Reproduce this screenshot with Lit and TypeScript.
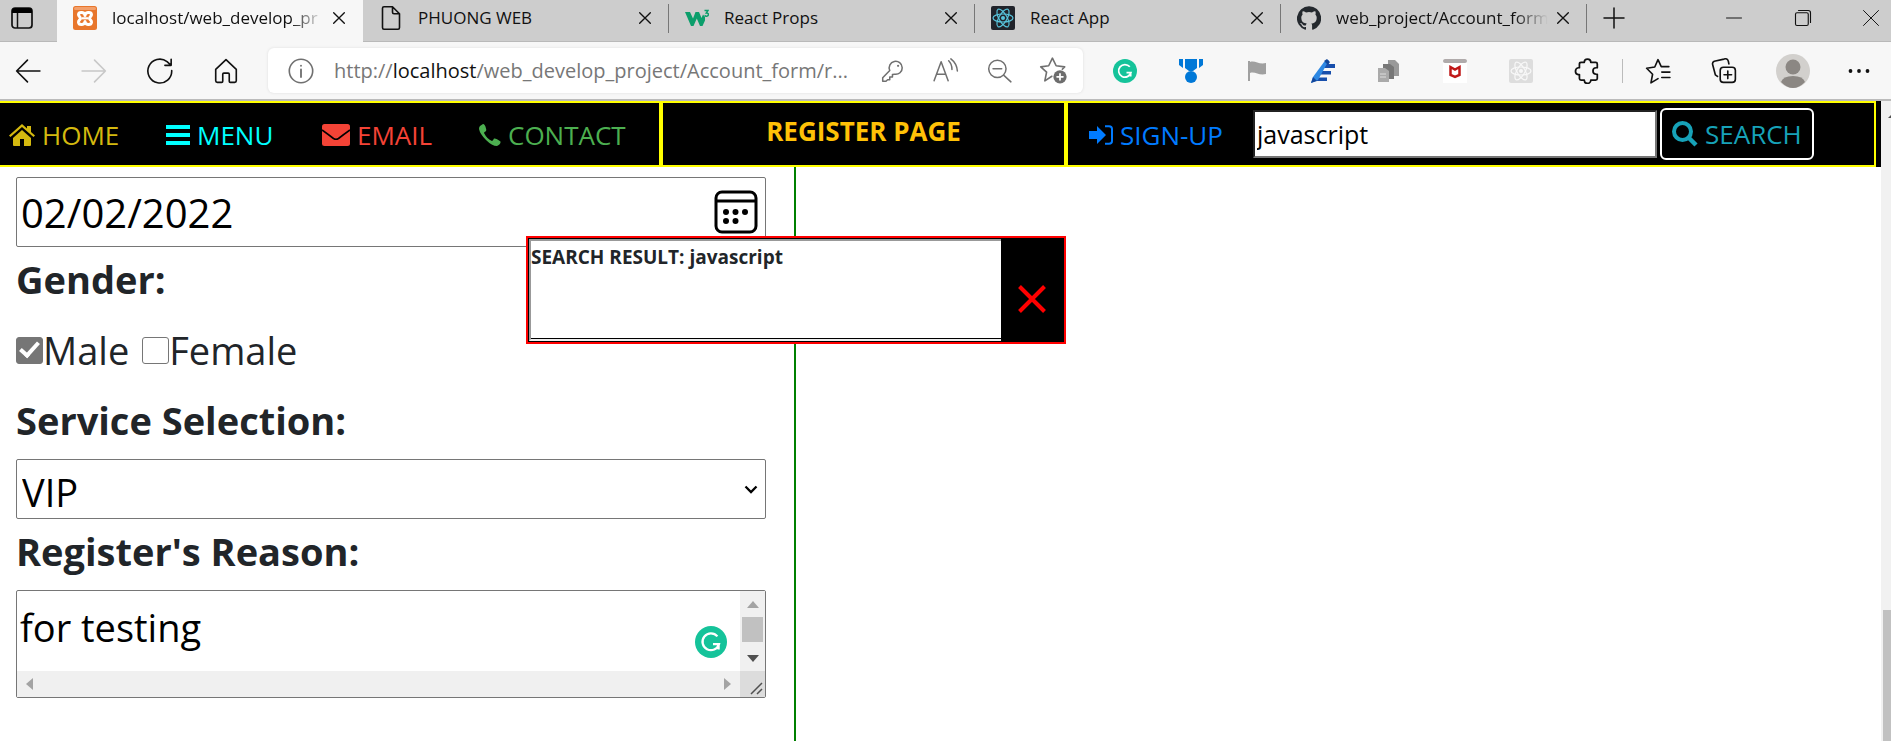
import { LitElement, html, css, svg } from "lit";
import { customElement, property, state } from "lit/decorators.js";

const stroke = (size: number, body: unknown, width = 1.5, cls = "") => html`<svg class=${cls} width=${size} height=${size} viewBox="0 0 24 24" fill="none" stroke="currentColor" stroke-width=${width} stroke-linejoin="round" stroke-linecap="round" aria-hidden="true">${body}</svg>`;
const solid = (size: number, body: unknown) => html`<svg width=${size} height=${size} viewBox="0 0 24 24" fill="currentColor" aria-hidden="true">${body}</svg>`;

const atom = (color: string) => svg`<g fill="none" stroke=${color} stroke-width="1.2"><ellipse cx="12" cy="12" rx="10" ry="4"/><ellipse cx="12" cy="12" rx="10" ry="4" transform="rotate(60 12 12)"/><ellipse cx="12" cy="12" rx="10" ry="4" transform="rotate(120 12 12)"/></g><circle cx="12" cy="12" r="2" fill=${color}/>`;

const favicons: Record<string, unknown> = {
  xampp: solid(24, svg`<rect width="24" height="24" rx="2.5" fill="#e8762c"/><rect x="1" y="1" width="22" height="3" rx="1.5" fill="#f3a06b"/><path fill="none" stroke="#fff" stroke-width="3" stroke-linejoin="round" stroke-linecap="round" d="M12 9.500C12 6 6 5.500 5.500 8.500C5.300 10.500 7.500 10.500 7.500 12.300C7.500 14 5.300 14 5.500 16.200C6 19.500 12 19 12 15.500C12 19 18 19.500 18.500 16.200C18.700 14 16.500 14 16.500 12.300C16.500 10.500 18.700 10.500 18.500 8.500C18 5.500 12 6 12 9.500Z"/><path d="M9 12.300H15" stroke="#fff" stroke-width="2.200"/>`),
  file: stroke(24, svg`<path d="M5 .8H13.500L20.500 7.800V21.500Q20.500 23.200 19 23.200H5Q3.500 23.200 3.500 21.500V2.300Q3.500 .8 5 .8ZM13.500 .8V6.300Q13.500 7.800 15 7.800H20.500"/>`, 1.6),
  w3: solid(24, svg`<path fill="#0c9e6b" d="M0 6H5L8 12.500L10.500 6H14L16.500 12L18 8.500L20 11V14.500L17.500 20H15L11.800 12.500L8.500 20H6Z"/><path fill="none" stroke="#0c9e6b" stroke-width="1.500" d="M19.500 4.500H23L21.300 7C24.500 7 23.700 10.800 21 10.200L19.500 9.500"/>`),
  react: solid(24, svg`<rect width="24" height="24" rx="2" fill="#20232a"/>${atom("#58c4dc")}`),
  github: solid(24, svg`<path fill="#24292e" d="M12 .3a12 12 0 0 0-3.800 23.400c.6.1.8-.3.8-.6v-2c-3.300.7-4-1.600-4-1.600-.6-1.400-1.400-1.800-1.400-1.800-1.100-.7.1-.7.1-.7 1.200.1 1.800 1.200 1.800 1.200 1.100 1.800 2.800 1.300 3.500 1 .1-.8.400-1.300.8-1.600-2.700-.3-5.500-1.300-5.500-6 0-1.200.5-2.300 1.300-3.100-.2-.4-.6-1.600.1-3.200 0 0 1-.3 3.300 1.200a11.500 11.500 0 0 1 6 0c2.300-1.500 3.300-1.200 3.300-1.200.7 1.600.3 2.800.1 3.200.8.8 1.300 1.900 1.300 3.200 0 4.600-2.800 5.600-5.500 5.900.5.400.9 1.100.9 2.200v3.300c0 .3.1.7.8.6A12 12 0 0 0 12 .3"/>`),
};

const grammarly = (size: number) => solid(size, svg`<circle cx="12" cy="12" r="12" fill="#15c39a"/><path fill="none" stroke="#fff" stroke-width="1.700" d="M16.800 7.800A6.300 6.300 0 1 0 18 13.600H13.500M17.700 13.600V17.600"/>`);

const cross = (size: number, width = 1.5) => stroke(size, svg`<path d="M4 4L20 20M20 4L4 20"/>`, width);

@customElement("browser-tab")
class BrowserTab extends LitElement {
  @property() label = "";
  @property() icon = "";
  @property({ type: Boolean, reflect: true }) active = false;
  static styles = css`
    :host { display: flex; align-items: center; flex: 0 1 306px; min-width: 0; height: 41px; box-sizing: border-box; padding: 0 14px 5px 16px; position: relative; font: 17px/24px "Open Sans", "Noto Sans", sans-serif; color: #111; }
    :host(:not([active]))::after { content: ""; position: absolute; right: 0; top: 4px; height: 29px; width: 1px; background: #777; }
    :host([active]) { background: #f7f7f7; height: 42px; padding-bottom: 6px; }
    .title { flex: 1; min-width: 0; margin-left: 15px; margin-right: 5px; white-space: nowrap; }
    .fade { mask-image: linear-gradient(to right, #000 84%, transparent 100%); }
    svg { flex: none; display: block; }
    button { border: 0; background: none; padding: 2px; color: #111; flex: none; }
  `;
  render() {
    return html`${favicons[this.icon]}
      <span class="title ${this.label.length > 16 ? "fade" : ""}">${this.label}</span>
      <button aria-label="Close tab">${cross(16, 2)}</button>`;
  }
}

@customElement("browser-chrome")
class BrowserChrome extends LitElement {
  static styles = css`
    :host { display: block; font-family: "Open Sans", "Noto Sans", sans-serif; color: #111; }
    button { border: 0; background: none; padding: 0; color: inherit; display: grid; place-items: center; flex: none; }
    svg { display: block; flex: none; }
    .strip { display: flex; align-items: flex-start; height: 42px; background: #cdcdcd; box-shadow: inset 0 -1px #b9b9b9; }
    .workspace { width: 57px; height: 36px; padding-right: 13px; box-sizing: border-box; }
    .plus { width: 54px; height: 35px; }
    .window { display: flex; margin-left: auto; height: 35px; }
    .window button { width: 69px; }
    .window button:last-child { width: 54px; padding-left: 14px; }
    .toolbar { display: flex; align-items: center; height: 57px; background: #f7f7f7; border-bottom: 2px solid #bbb; }
    .nav { display: flex; width: 268px; padding-left: 11px; box-sizing: border-box; gap: 32px; }
    .nav button { width: 34px; }
    .pale { color: #c8c8c8; }
    .address { display: flex; align-items: center; flex: 0 1 815px; min-width: 0; height: 45px; box-sizing: border-box; background: #fff; border-radius: 6px; padding: 0 16px 0 20px; color: #707070; box-shadow: 0 0 3px #ddd; }
    .url { flex: 1; min-width: 0; margin-left: 20px; font-size: 20px; line-height: 28px; white-space: nowrap; overflow: hidden; text-overflow: ellipsis; color: #777; }
    .url b { font-weight: 400; color: #111; }
    .tools { display: flex; gap: 27px; }
    .extras { display: flex; flex: 1; align-items: center; padding-left: 9px; min-width: 0; }
    .extras button { flex: 0 1 66px; min-width: 34px; }
    .extras .profile { flex-basis: 72px; }
    .extras button:last-child { flex-basis: 60px; }
    .rule { width: 1px; height: 24px; background: #bbb; margin: 0 2px; }
  `;
  render() {
    return html`
      <div class="strip">
        <button class="workspace" aria-label="Tab actions"><svg width="22" height="22" viewBox="0 0 22 22"><rect x="1" y="1" width="20" height="20" rx="3" fill="none" stroke="#111" stroke-width="1.700"/><path d="M1 6V4Q1 1 4 1H18Q21 1 21 4V6Z"/><path d="M6.500 6V21" stroke="#111" stroke-width="1.500"/></svg></button>
        <browser-tab active icon="xampp" label="localhost/web_develop_pr"></browser-tab>
        <browser-tab icon="file" label="PHUONG WEB"></browser-tab>
        <browser-tab icon="w3" label="React Props"></browser-tab>
        <browser-tab icon="react" label="React App"></browser-tab>
        <browser-tab icon="github" label="web_project/Account_form"></browser-tab>
        <button class="plus" aria-label="New tab">${stroke(24, svg`<path d="M2 12H22M12 2V22"/>`)}</button>
        <div class="window">
          <button aria-label="Minimize">${stroke(18, svg`<path d="M2 12H22"/>`, 1.3)}</button>
          <button aria-label="Restore">${stroke(18, svg`<rect x="2" y="5" width="17" height="17" rx="2"/><path d="M6 2H19Q22 2 22 5V18"/>`)}</button>
          <button aria-label="Close window">${stroke(18, svg`<path d="M2 2L22 22M22 2L2 22"/>`, 1.3)}</button>
        </div>
      </div>
      <div class="toolbar">
        <div class="nav">
          <button aria-label="Back">${stroke(26, svg`<path d="M23 12H1.500M11.500 2L1.500 12L11.500 22"/>`)}</button>
          <button class="pale" aria-label="Forward">${stroke(26, svg`<path d="M1 12H22.500M12.500 2L22.500 12L12.500 22"/>`)}</button>
          <button aria-label="Refresh">${stroke(26, svg`<path d="M22.800 11.500A11 11 0 1 1 18.500 3.300L22 6.500M22.300 1.200V6.800H16.500"/>`)}</button>
          <button aria-label="Home">${stroke(26, svg`<path d="M2.500 10.500L12 1.500L21.500 10.500V21Q21.500 22.500 20 22.500H16Q15 22.500 15 21.500V15Q15 14 14 14H10Q9 14 9 15V21.500Q9 22.500 8 22.500H4Q2.500 22.500 2.500 21Z"/>`)}</button>
        </div>
        <div class="address">
          ${stroke(26, svg`<circle cx="12" cy="12" r="10.800"/><path d="M12 10.500V17.500M12 7V7.200" stroke-width="1.700"/>`)}
          <span class="url">http://<b>localhost</b>/web_develop_project/Account_form/r...</span>
          <div class="tools">
            <button aria-label="Saved passwords">${stroke(26, svg`<path d="M2.500 21.500V18.300L9 11.500A6 6 0 1 1 13.500 15L11.500 15.300V17.500H9V20H7L5.500 21.500Z"/><circle cx="16.700" cy="7.200" r="1" fill="currentColor" stroke="none"/>`, 1.4)}</button>
            <button aria-label="Read aloud">${stroke(26, svg`<path d="M1 21L7.500 3.500L14 21M3.500 15H11.500M14.500 2.500Q17.500 5.500 17.500 10.500M16.500 .8Q22 5 22.500 12"/>`, 1.4)}</button>
            <button aria-label="Zoom out">${stroke(26, svg`<circle cx="10.500" cy="10" r="8"/><path d="M16.500 16L23 22M6.500 10H14.500"/>`, 1.4)}</button>
            <button aria-label="Add to favourites">${stroke(28, svg`<path d="M11 16.500L5 20.500L6.500 13L1.500 8.500L8.300 7.500L11.500 1L14.700 7.500L22 8.500L20 10.500" stroke-width="1.400"/><circle cx="18" cy="17" r="5.700" fill="#6d6d6d" stroke="none"/><path d="M18 14.500V19.500M15.500 17H20.500" stroke="#fff"/>`)}</button>
          </div>
        </div>
        <div class="extras">
          <button aria-label="Grammarly">${grammarly(24)}</button>
          <button aria-label="Medal">${solid(24, svg`<g fill="#0078d7"><path d="M0 0H4V9L0 6ZM20 0H24V6L20 9ZM6 0H18V9L14 12H10L6 9Z"/><circle cx="12" cy="18" r="6"/></g>`)}</button>
          <button aria-label="Flag">${solid(24, svg`<path fill="#a0a0a0" d="M3 2H5V22H3ZM5 3C10 1 14 6 21 4V15C14 17 10 12 5 14Z"/>`)}</button>
          <button aria-label="Pen tool">${solid(24, svg`<path fill="#184fac" d="M13 5H24V9H13ZM10 12H20V15.500H10ZM5 18.500H16V22H5Z"/><path fill="#2d88e3" d="M13 3L18 1L7 21L0 24L2 18Z"/><path fill="#12479b" d="M13 2L16 0L19 3L17 6ZM0 24L2 18L6 22Z"/>`)}</button>
          <button aria-label="Copy pages">${solid(24, svg`<path fill="#999" d="M11 1H18L22 5V17H11Z"/><path fill="#777" d="M6 5H13L17 8V20H6Z"/><path fill="#aaa" d="M1 9H8L12 12V23H1Z"/><path stroke="#ddd" d="M3 15H9M3 18H9"/>`)}</button>
          <button aria-label="McAfee">${solid(24, svg`<path fill="#fff" d="M0 0H24V24H0Z"/><rect width="24" height="4" rx="2" fill="#b0abab"/><path fill="none" stroke="#c01818" stroke-width="2.500" d="M7.500 8L12 10.500L16.500 8V16L12 18L7.500 16Z"/>`)}</button>
          <button aria-label="React tools">${solid(24, svg`<rect width="24" height="24" rx="2" fill="#ddd"/>${atom("#f8f8f8")}`)}</button>
          <button aria-label="Extensions">${stroke(26, svg`<path d="M9.500 4A3 3 0 0 1 15.500 4H20Q21.500 4 21.500 5.500V9H20.500A3 3 0 0 0 20.500 15H21.500V19Q21.500 20.500 20 20.500H15.500A3 3 0 0 1 9.500 20.500H6.500Q5 20.500 5 19V15.300H4A3.200 3.200 0 0 1 4 9H5V5.500Q5 4 6.500 4Z"/>`, 1.6)}</button>
          <span class="rule"></span>
          <button aria-label="Favourites">${stroke(26, svg`<path d="M12 19L5.500 23L7 15L1.500 9.500L9 8.300L12 1.500L15 8H22M15.500 13H23M15.500 18H23"/>`)}</button>
          <button aria-label="Collections">${stroke(26, svg`<rect x="8.500" y="8.500" width="14" height="14" rx="3"/><path d="M15.500 12V19M12 15.500H19M6 17L4 15.500L1.500 6Q1 4 3 3L12 1Q15 0 16 3L16.500 5.500"/>`)}</button>
          <button class="profile" aria-label="Profile"><svg width="34" height="34" viewBox="0 0 34 34"><circle cx="17" cy="17" r="17" fill="#d2d0cd"/><circle cx="17" cy="13" r="7.500" fill="#8b8783"/><path fill="#8b8783" d="M5 28Q7 22 17 22Q27 22 29 28Q23 34 17 34Q11 34 5 28Z"/></svg></button>
          <button aria-label="More">${solid(24, svg`<circle cx="3.500" cy="12" r="1.900"/><circle cx="12" cy="12" r="1.900"/><circle cx="20.500" cy="12" r="1.900"/>`)}</button>
        </div>
      </div>`;
  }
}

@customElement("site-nav")
class SiteNav extends LitElement {
  static styles = css`
    :host { display: grid; grid-template-columns: minmax(0, 661fr) minmax(0, 405fr) minmax(0, 810fr); background: #000; padding-right: 5px; font: 26px/36px "Open Sans", "Noto Sans", sans-serif; }
    .cell { border: 2px solid #ff0; height: 66px; box-sizing: border-box; display: flex; align-items: center; }
    .links { border-left: 0; padding-left: 9px; }
    .heading { justify-content: center; align-items: flex-start; padding-top: 10px; }
    .account { padding-left: 21px; }
    h1 { margin: 0; font-size: 26px; line-height: 36px; font-weight: 700; color: #ffc107; white-space: nowrap; }
    a { display: flex; align-items: center; gap: 7px; text-decoration: none; white-space: nowrap; padding-top: 2px; }
    svg { display: block; flex: none; }
    .home { color: #d4b90f; width: 157px; }
    .menu { color: #0ff; width: 156px; }
    .email { color: #f44336; width: 157px; }
    .contact { color: #4caf50; }
    .signup { color: #007bff; width: 164px; }
    input { width: 404px; min-width: 0; height: 48px; box-sizing: border-box; border: 2px inset #767676; background: #fff; padding: 2px; font: inherit; font-size: 25px; color: #000; outline: 0; border-radius: 0; }
    button { display: flex; align-items: center; gap: 7px; height: 52px; margin-left: 3px; border: 2px solid #fff; border-radius: 6px; background: #000; color: #17a2b8; padding: 0 10px; font: inherit; white-space: nowrap; }
  `;
  render() {
    return html`
      <nav class="cell links">
        <a class="home" href="#home"><svg width="26" height="22" viewBox="0 0 26 22"><path fill="currentColor" d="M13 6L22 14V21Q22 22 21 22H15V15H11V22H5Q4 22 4 21V14ZM13 0L18 4.500V2H22V8L26 11.500L24.500 13L13 3L1.500 13L0 11.500Z"/></svg>HOME</a>
        <a class="menu" href="#menu"><svg width="24" height="20" viewBox="0 0 24 20"><path fill="currentColor" d="M0 0H24V4H0ZM0 8H24V12H0ZM0 16H24V20H0Z"/></svg>MENU</a>
        <a class="email" href="#email"><svg width="28" height="22" viewBox="0 0 28 22"><rect width="28" height="22" rx="2.500" fill="currentColor"/><path d="M0 6Q7 11 11.500 14.500Q14 16 16.500 14.500Q21 11 28 6" fill="none" stroke="#000" stroke-width="1.600"/></svg>EMAIL</a>
        <a class="contact" href="#contact"><svg width="22" height="22" viewBox="0 0 22 22"><path fill="currentColor" d="M1 2L4 0Q6 0 7 4.500Q8 7 5.500 8L5 9Q8 15 13 17Q14 16.500 15 14.500Q17 14 21.500 17.500Q22 20 18 22Q13 22 7 16Q1 10 0 5Q0 3 1 2Z"/></svg>CONTACT</a>
      </nav>
      <div class="cell heading"><h1>REGISTER PAGE</h1></div>
      <form class="cell account" @submit=${(e: Event) => e.preventDefault()}>
        <a class="signup" href="#signup"><svg width="24" height="20" viewBox="0 0 24 20"><path fill="currentColor" d="M0 6H8V1L17 10L8 19V14H0Z"/><path d="M16 1.200H20Q23 1.200 23 4V16Q23 18.800 20 18.800H16" fill="none" stroke="currentColor" stroke-width="2"/></svg>SIGN-UP</a>
        <input type="text" aria-label="Search text" .value=${"javascript"}>
        <button type="submit"><svg width="26" height="26" viewBox="0 0 26 26" fill="none" stroke="currentColor"><circle cx="10.500" cy="10.500" r="8.500" stroke-width="4"/><path d="M17 17L24 24" stroke-width="4.500"/></svg>SEARCH</button>
      </form>`;
  }
}

@customElement("register-form")
class RegisterForm extends LitElement {
  static styles = css`
    :host { display: block; color: #212529; font: 38px/48px "Open Sans", "Noto Sans", sans-serif; }
    .title { display: block; font-weight: 700; line-height: 64px; margin: 0; padding: 0; white-space: nowrap; }
    label.title { padding: 0 0 7px; }
    fieldset { border: 0; padding: 0; margin: 0; min-width: 0; }
    .field { display: flex; align-items: center; border: 1px solid #767676; border-radius: 2px; box-sizing: border-box; width: 100%; background: #fff; }
    .date { height: 70px; padding-right: 7px; }
    .date input { flex: 1; min-width: 0; border: 0; outline: 0; padding: 2px 0 0 4px; font: inherit; font-size: 40px; color: #000; background: none; }
    .date button { border: 0; background: none; padding: 0; color: #000; }
    svg { display: block; }
    .options { display: flex; gap: 13px; padding: 15px 0 14px; align-items: center; }
    .options label { display: flex; align-items: center; line-height: 48px; }
    .options input { appearance: none; width: 27px; height: 27px; margin: 0; border: 1px solid #767676; border-radius: 3px; background: #fff; display: grid; place-items: center; }
    .options input:checked { background: #767676; }
    .options input:checked::before { content: ""; width: 7px; height: 15px; border: solid #fff; border-width: 0 4px 4px 0; transform: rotate(42deg); margin-bottom: 5px; }
    .select { height: 60px; }
    select { appearance: none; flex: 1; height: 58px; border: 0; padding: 6px 32px 0 5px; font: inherit; line-height: 50px; color: #000; background: none; }
    .chevron { margin-left: -21px; margin-right: 7px; pointer-events: none; }
    .reason { display: grid; grid-template: 80px 26px / 1fr 25px; height: 108px; }
    textarea { box-sizing: border-box; height: 80px; width: 100%; resize: none; border: 0; outline: 0; padding: 8px 3px; font: inherit; line-height: 56px; color: #000; background: none; overflow: hidden; display: block; }
    .text { position: relative; }
    .badge { position: absolute; right: 13px; top: 35px; }
    .bar { background: #f0f0f0; display: flex; justify-content: space-between; align-items: center; align-self: stretch; box-sizing: border-box; }
    .side { flex-direction: column; padding: 10px 0 9px; }
    .foot { padding: 0 9px; }
    .thumb { width: 21px; height: 25px; background: #c1c1c1; margin-bottom: 5px; }
    .grip { background: #dcdcdc; align-self: stretch; display: grid; place-items: end; padding: 2px; }
  `;
  render() {
    return html`
      <form @submit=${(e: Event) => e.preventDefault()}>
        <div class="field date">
          <input type="text" aria-label="Date" .value=${"02/02/2022"}>
          <button type="button" aria-label="Open calendar"><svg width="44" height="44" viewBox="0 0 44 44"><rect x="2" y="2" width="40" height="40" rx="6" fill="none" stroke="#000" stroke-width="3"/><path d="M2 11H42" stroke="#000" stroke-width="3"/><circle cx="12" cy="22" r="3"/><circle cx="21.500" cy="22" r="3"/><circle cx="31" cy="22" r="3"/><circle cx="12" cy="31" r="3"/><circle cx="21.500" cy="31" r="3"/></svg></button>
        </div>
        <fieldset>
          <legend class="title">Gender:</legend>
          <div class="options">
            <label><input type="checkbox" checked>Male</label>
            <label><input type="checkbox">Female</label>
          </div>
        </fieldset>
        <label class="title" for="service">Service Selection:</label>
        <div class="field select">
          <select id="service"><option>VIP</option></select>
          <svg class="chevron" width="14" height="9" viewBox="0 0 14 9"><path d="M1.500 1.500L7 7L12.500 1.500" fill="none" stroke="#000" stroke-width="2.300"/></svg>
        </div>
        <label class="title" for="reason">Register's Reason:</label>
        <div class="field reason">
          <div class="text"><textarea id="reason" wrap="off" .value=${"for testing"}></textarea><span class="badge">${grammarly(32)}</span></div>
          <div class="bar side"><svg width="12" height="7"><path fill="#a3a3a3" d="M0 7L6 0L12 7Z"/></svg><span class="thumb"></span><svg width="12" height="7"><path fill="#505050" d="M0 0L6 7L12 0Z"/></svg></div>
          <div class="bar foot"><svg width="7" height="12"><path fill="#a3a3a3" d="M7 0L0 6L7 12Z"/></svg><svg width="7" height="12"><path fill="#a3a3a3" d="M0 0L7 6L0 12Z"/></svg></div>
          <div class="grip"><svg width="13" height="13"><path d="M1 12L12 1M7 12L12 7" stroke="#505050" stroke-width="1.500"/></svg></div>
        </div>
      </form>`;
  }
}

@customElement("search-result")
class SearchResult extends LitElement {
  @property() term = "";
  static styles = css`
    :host { display: flex; height: 108px; box-sizing: border-box; border: 2px solid #f00; background: #000; font: 700 19px/26px "Open Sans", "Noto Sans", sans-serif; color: #212529; }
    .panel { flex: 1; margin: 1px 0 1px 1px; background: #fff; border-top: 2px solid #999; border-left: 2px solid #999; border-bottom: 2px solid #eee; }
    p { margin: 0; height: 98px; box-sizing: border-box; border-bottom: 1px solid #000; padding-top: 3px; }
    button { width: 63px; border: 0; padding: 18px 2px 0 0; background: #000; color: #f00; display: grid; place-items: center; }
  `;
  render() {
    return html`<div class="panel"><p>SEARCH RESULT: ${this.term}</p></div>
      <button aria-label="Close search result" @click=${() => this.dispatchEvent(new CustomEvent("dismiss"))}><svg width="28" height="28" viewBox="0 0 28 28"><path d="M1.500 1.500L26.500 26.500M26.500 1.500L1.500 26.500" stroke="currentColor" stroke-width="4"/></svg></button>`;
  }
}

@customElement("app-root")
class AppRoot extends LitElement {
  @state() open = true;
  static styles = css`
    :host { display: flex; flex-direction: column; height: 100vh; overflow: hidden; background: #fff; }
    .view { flex: 1; min-height: 0; display: flex; }
    .page { flex: 1; min-width: 0; display: flex; flex-direction: column; position: relative; }
    .columns { flex: 1; min-height: 0; display: flex; }
    .column { flex: 0 1 796px; box-sizing: border-box; border-right: 2px solid #008000; padding: 10px 28px 0 16px; }
    .popup { position: absolute; left: 526px; top: 135px; width: 540px; }
    .scroll { width: 10px; background: #f1f1f1; display: flex; flex-direction: column; justify-content: space-between; overflow: hidden; padding-top: 12px; box-sizing: border-box; }
    .scroll svg { display: block; margin-left: 7px; }
    .thumb { height: 131px; margin-left: 2px; background: #c1c1c1; }
  `;
  render() {
    return html`<browser-chrome></browser-chrome>
      <div class="view">
        <main class="page">
          <site-nav></site-nav>
          <div class="columns"><section class="column"><register-form></register-form></section></div>
          ${this.open ? html`<search-result class="popup" term="javascript" @dismiss=${() => (this.open = false)}></search-result>` : ""}
        </main>
        <div class="scroll"><svg width="10" height="5"><path fill="#505050" d="M0 5L5 0L10 5Z"/></svg><span class="thumb"></span></div>
      </div>`;
  }
}
